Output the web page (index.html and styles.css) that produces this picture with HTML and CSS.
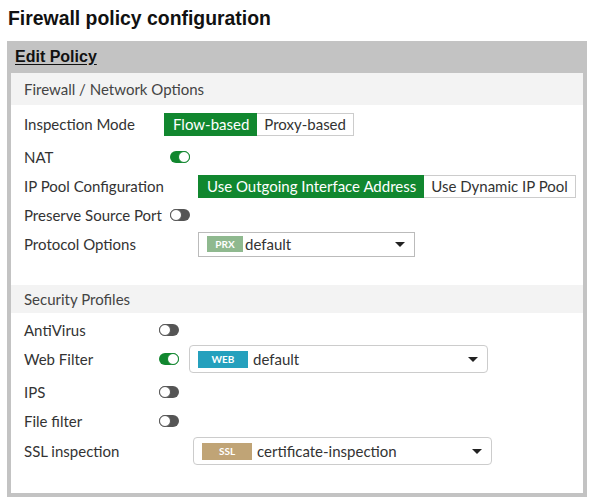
FILE: index.html
```html
<!DOCTYPE html>
<html lang="en">
<head>
    <meta charset="UTF-8">
    <meta name="viewport" content="width=device-width, initial-scale=1.0">
    <title>Firewall policy configuration</title>
    <link rel="stylesheet" href="styles.css">
</head>
<body>

    <h2 class="page-title">Firewall policy configuration</h2>

    <div class="policy-box">
        <div class="box-head"><span>Edit Policy</span></div>

        <div class="section-head head-net">Firewall / Network Options</div>
        <div class="rows rows-net">
            <div class="row row-mode">
                <span class="label lbl-mode">Inspection Mode</span>
                <div class="seg">
                    <span class="seg-opt active">Flow-based</span>
                    <span class="seg-opt">Proxy-based</span>
                </div>
            </div>
            <div class="row">
                <span class="label lbl-nat">NAT</span>
                <span class="toggle on"></span>
            </div>
            <div class="row">
                <span class="label lbl-pool">IP Pool Configuration</span>
                <div class="seg">
                    <span class="seg-opt active">Use Outgoing Interface Address</span>
                    <span class="seg-opt">Use Dynamic IP Pool</span>
                </div>
            </div>
            <div class="row">
                <span class="label lbl-port">Preserve Source Port</span>
                <span class="toggle"></span>
            </div>
            <div class="row">
                <span class="label lbl-pool">Protocol Options</span>
                <div class="select select-prx">
                    <span class="badge badge-prx">PRX</span>
                    <span class="select-text">default</span>
                    <span class="caret"></span>
                </div>
            </div>
        </div>

        <div class="section-head head-sec">Security Profiles</div>
        <div class="rows rows-sec">
            <div class="row">
                <span class="label lbl-sec">AntiVirus</span>
                <span class="toggle"></span>
            </div>
            <div class="row row-web">
                <span class="label lbl-sec">Web Filter</span>
                <span class="toggle on"></span>
                <div class="select select-round">
                    <span class="badge badge-web">WEB</span>
                    <span class="select-text">default</span>
                    <span class="caret"></span>
                </div>
            </div>
            <div class="row">
                <span class="label lbl-sec">IPS</span>
                <span class="toggle"></span>
            </div>
            <div class="row">
                <span class="label lbl-sec">File filter</span>
                <span class="toggle"></span>
            </div>
            <div class="row row-ssl">
                <span class="label lbl-ssl">SSL inspection</span>
                <div class="select select-round">
                    <span class="badge badge-ssl">SSL</span>
                    <span class="select-text">certificate-inspection</span>
                    <span class="caret"></span>
                </div>
            </div>
        </div>
    </div>

</body>
</html>
```

FILE: styles.css
```css
body {
    margin: 0;
    padding: 0 7px;
    background: white;
    color: #333;
    font-family: 'Lato', sans-serif;
}

.page-title {
    font-family: 'Liberation Sans', Arial, sans-serif;
    font-size: 19.4px;
    font-weight: bold;
    color: #111;
    margin: 0;
    padding: 7px 1px 0;
    height: 41px;
    box-sizing: border-box;
}

.policy-box {
    width: 580px;
    box-sizing: border-box;
    border: 4px solid #c3c3c3;
    border-top: none;
    height: 456px;
}

.box-head {
    background: #c3c3c3;
    height: 32px;
    display: flex;
    align-items: center;
    padding-left: 4px;
}

.box-head span {
    font-family: 'Liberation Sans', Arial, sans-serif;
    font-size: 16px;
    font-weight: bold;
    color: #111;
    text-decoration: underline;
    text-underline-offset: 2px;
}

.section-head {
    background: #f3f3f3;
    display: flex;
    align-items: center;
    padding-left: 13px;
    font-size: 15px;
    color: #444;
}

.head-net { height: 32px; }
.head-sec { height: 28px; }

.rows {
    display: flex;
    flex-direction: column;
    gap: 1px;
    padding-left: 13px;
}

.rows-net {
    padding-top: 5px;
    padding-bottom: 27px;
}

.rows-sec {
    padding-top: 3px;
}

.row {
    height: 28px;
    display: flex;
    align-items: center;
    font-size: 15px;
    color: #333;
}

.row-mode,
.row-web {
    margin-bottom: 4px;
}

.row-ssl {
    margin-top: 1px;
}

.label {
    flex: none;
}

.lbl-mode { width: 140px; }
.lbl-nat { width: 146px; }
.lbl-pool { width: 174px; }
.lbl-port { width: 146px; }
.lbl-sec { width: 135px; }
.lbl-ssl { width: 169px; }

.seg {
    display: flex;
    height: 23px;
    border: 1px solid #ccc;
    box-sizing: border-box;
}

.seg-opt {
    display: flex;
    align-items: center;
    padding: 0 7px;
    font-size: 15px;
    color: #333;
    background: white;
}

.seg-opt.active {
    background: #11872f;
    color: white;
    margin: -1px 0 -1px -1px;
    padding: 0 8px 0 9px;
}

.toggle {
    position: relative;
    width: 20px;
    height: 12px;
    border-radius: 6px;
    background: #555;
    flex: none;
}

.toggle::after {
    content: "";
    position: absolute;
    left: 0;
    top: 0;
    width: 12px;
    height: 12px;
    box-sizing: border-box;
    border-radius: 50%;
    background: white;
    border: 1.5px solid #555;
}

.toggle.on {
    background: #11872f;
}

.toggle.on::after {
    left: 8px;
    border-color: #11872f;
}

.select {
    display: flex;
    align-items: center;
    width: 217px;
    height: 25px;
    box-sizing: border-box;
    border: 1px solid #bbb;
    padding-left: 8px;
    padding-right: 9px;
    background: white;
}

.select-round {
    width: 299px;
    height: 28px;
    border-radius: 4px;
    border-color: #ccc;
}

.row-web .select {
    margin-left: 10px;
}

.badge {
    display: flex;
    align-items: center;
    justify-content: center;
    height: 17px;
    width: 50px;
    font-size: 10px;
    font-weight: bold;
    color: white;
    margin-right: 5px;
}

.badge-prx {
    width: 36px;
    height: 16px;
    background: #8fb98f;
    margin-right: 2px;
}

.badge-web { background: #25a0bd; }
.badge-ssl { background: #c0a476; }

.select-text {
    flex: 1;
    font-size: 15px;
    color: #333;
}

.caret {
    width: 0;
    height: 0;
    border-left: 5px solid transparent;
    border-right: 5px solid transparent;
    border-top: 5px solid #222;
}
```
